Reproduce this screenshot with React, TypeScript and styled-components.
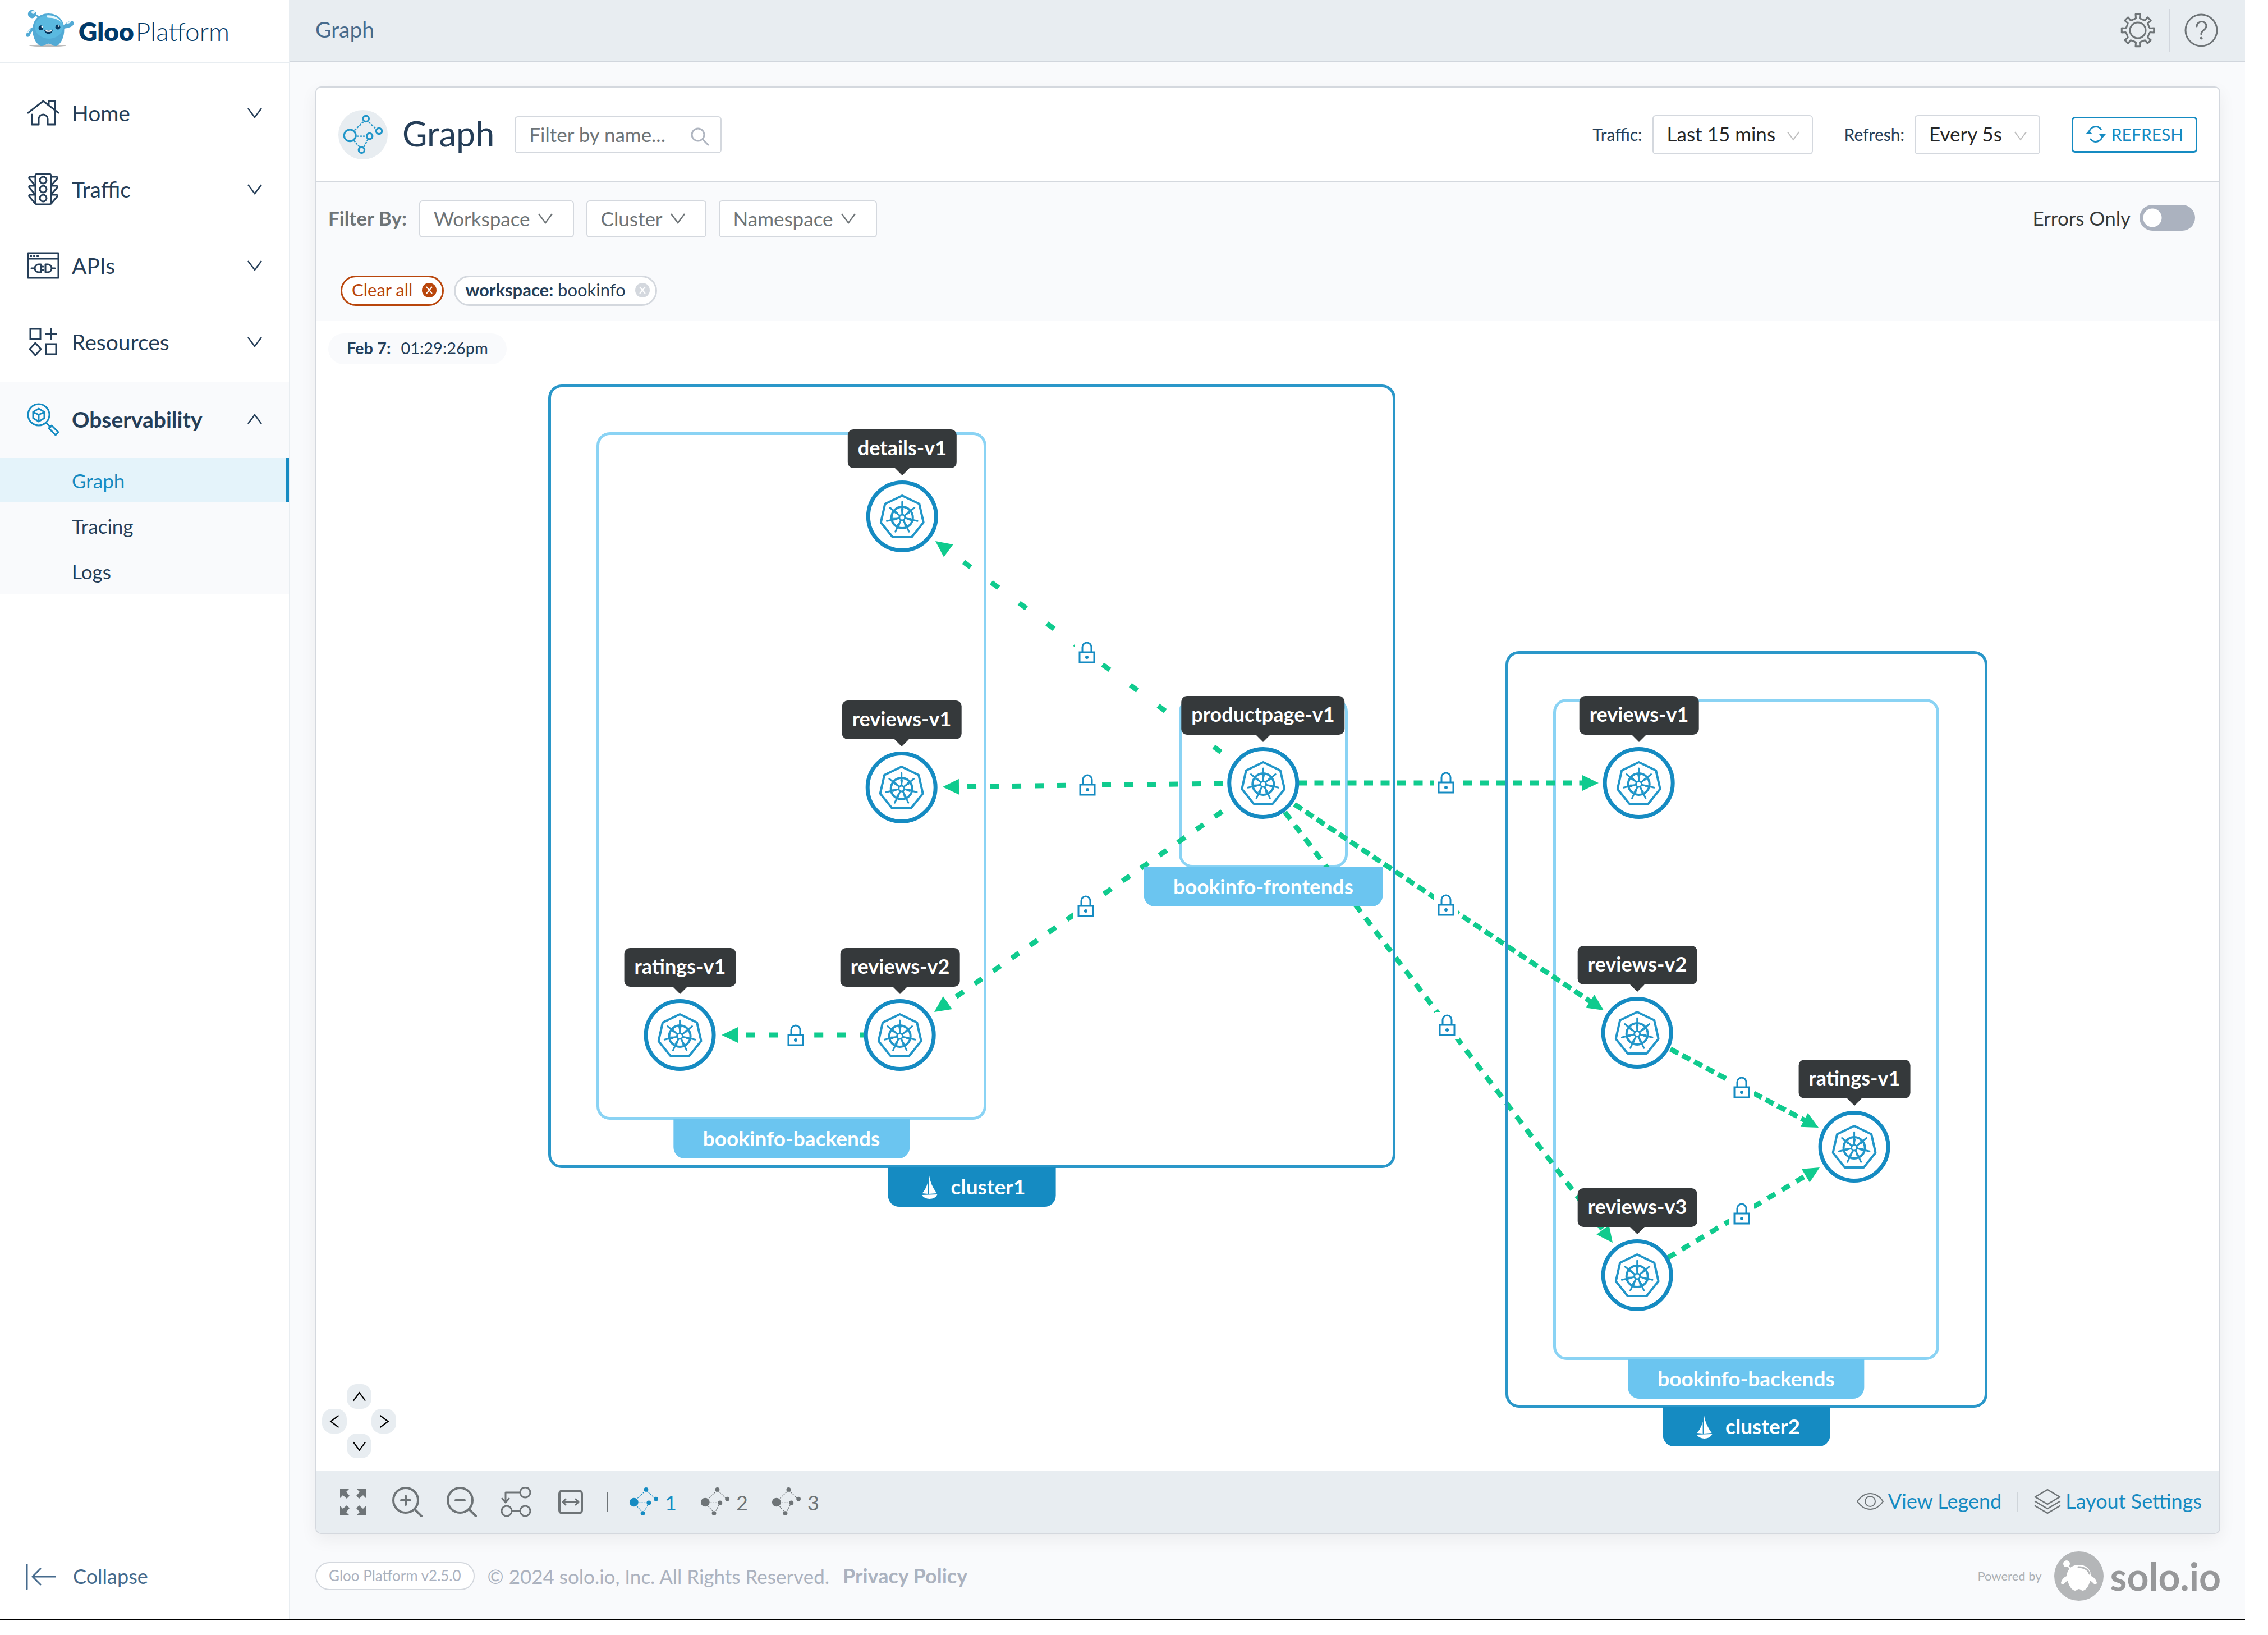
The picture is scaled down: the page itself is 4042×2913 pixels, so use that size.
import React from "react";
import styled, { createGlobalStyle } from "styled-components";

const color = {
  navy: "#253e58",
  slate: "#466b8d",
  gray: "#6e7477",
  muted: "#abb2bf",
  line: "#d4d8de",
  bar: "#e8edf1",
  page: "#f9fafc",
  blue: "#158bc2",
  sky: "#2196c9",
  light: "#8ad3f4",
  tag: "#6bc5f0",
  green: "#10cb8e",
  dark: "#35393b",
  orange: "#b9460c",
};

const GlobalStyle = createGlobalStyle`
  *, *::before, *::after { box-sizing: border-box; }
  body { margin: 0; background: #fff; color: ${color.navy}; font-family: Lato, "Open Sans", sans-serif; line-height: 1.2; }
  button, input, select { font: inherit; color: inherit; margin: 0; }
  button { cursor: pointer; padding: 0; border: 0; background: none; }
  a { color: inherit; text-decoration: none; }
  svg { display: block; flex: none; }
`;

/* ---------- page frame ---------- */

const Page = styled.div`
  display: grid;
  grid-template-columns: 516px minmax(0, 1fr);
  min-height: calc(100vh - 27px);
  margin-right: 41px;
  border-bottom: 1px solid #000;
`;

const Sidebar = styled.aside`
  display: flex;
  flex-direction: column;
  border-right: 1px solid ${color.bar};
  background: #fff;
`;

const Brand = styled.a`
  display: flex;
  align-items: center;
  gap: 8px;
  height: 112px;
  padding: 0 0 10px 46px;
  border-bottom: 2px solid ${color.bar};
  color: #003a69;
  font-size: 46px;
`;

const BrandName = styled.span`
  padding-top: 12px;
  font-weight: 300;
  b {
    font-weight: 800;
    margin-right: 3px;
  }
`;

const Nav = styled.nav`
  flex: 1;
  padding-top: 22px;
`;

const NavButton = styled.button<{ $open?: boolean }>`
  display: grid;
  grid-template-columns: 58px 1fr 26px;
  align-items: center;
  column-gap: 22px;
  width: 100%;
  height: 136px;
  padding: 0 48px 2px;
  text-align: left;
  font-size: 39px;
  font-weight: ${(p) => (p.$open ? 700 : 400)};
  svg {
    justify-self: center;
  }
`;

const NavSection = styled.div`
  margin-top: 2px;
  background: ${color.page};
`;

const SubList = styled.ul`
  display: grid;
  gap: 2px;
  margin: 0;
  padding: 0 0 1px;
  list-style: none;
`;

const SubLink = styled.a<{ $active?: boolean }>`
  display: flex;
  align-items: center;
  height: 79px;
  padding-left: 128px;
  border-right: 6px solid ${(p) => (p.$active ? color.blue : "transparent")};
  background: ${(p) => (p.$active ? "#e4f3fa" : "transparent")};
  color: ${(p) => (p.$active ? color.blue : color.navy)};
  font-size: 35px;
`;

const Collapse = styled.button`
  display: flex;
  align-items: center;
  gap: 30px;
  height: 152px;
  padding-left: 46px;
  color: ${color.slate};
  font-size: 36px;
`;

const Main = styled.main`
  display: flex;
  flex-direction: column;
  min-width: 0;
  background: ${color.page};
`;

const TopBar = styled.header`
  display: flex;
  align-items: center;
  justify-content: space-between;
  height: 110px;
  padding: 0 48px 0 46px;
  border-bottom: 2px solid #d1d6dd;
  background: ${color.bar};
  color: ${color.slate};
  font-size: 39px;
`;

const Crumb = styled.span`
  padding-bottom: 4px;
`;

const TopActions = styled.div`
  display: flex;
  align-items: center;
  gap: 25px;
`;

const Divider = styled.span<{ $height: number; $color: string }>`
  width: 2px;
  height: ${(p) => p.$height}px;
  background: ${(p) => p.$color};
`;

const IconButton = styled.button`
  display: flex;
  align-items: center;
  justify-content: center;
  color: ${color.gray};
`;

/* ---------- card ---------- */

const Card = styled.section`
  display: flex;
  flex: 1;
  flex-direction: column;
  margin: 44px 44px 0 46px;
  border: 2px solid ${color.line};
  border-radius: 10px;
  background: #fff;
  box-shadow: 0 10px 30px rgba(0, 0, 0, 0.06);
  overflow: hidden;
`;

const CardHeader = styled.div`
  display: flex;
  align-items: center;
  height: 169px;
  padding: 0 39px;
  border-bottom: 2px solid ${color.line};
`;

const RoundIcon = styled.span`
  display: flex;
  align-items: center;
  justify-content: center;
  width: 88px;
  height: 88px;
  border-radius: 50%;
  background: ${color.bar};
  color: ${color.sky};
`;

const Title = styled.h1`
  margin: 0 36px 0 26px;
  padding-bottom: 4px;
  font-size: 61px;
  font-weight: 400;
`;

const SearchBox = styled.label`
  display: flex;
  align-items: center;
  width: 369px;
  height: 66px;
  padding: 0 20px 0 24px;
  border: 2px solid ${color.line};
  border-radius: 6px;
  color: #afb5c0;
  svg {
    margin-top: 6px;
  }
`;

const SearchInput = styled.input`
  flex: 1;
  min-width: 0;
  padding: 0 0 2px;
  border: 0;
  outline: 0;
  background: none;
  font-size: 35px;
  &::placeholder {
    color: ${color.gray};
    opacity: 1;
  }
`;

const HeaderControls = styled.div`
  display: flex;
  align-items: center;
  margin-left: auto;
  gap: 56px;
`;

const Field = styled.div`
  display: flex;
  align-items: center;
  gap: 18px;
  font-size: 30px;
  label {
    padding-bottom: 2px;
  }
`;

const SelectWrap = styled.span<{ $width: number }>`
  position: relative;
  display: block;
  width: ${(p) => p.$width}px;
  svg {
    position: absolute;
    right: 24px;
    top: 26px;
    color: #bfbfbf;
    pointer-events: none;
  }
`;

const Select = styled.select`
  width: 100%;
  height: 70px;
  padding: 0 0 4px 24px;
  border: 2px solid ${color.line};
  border-radius: 6px;
  background: #fff;
  color: #262626;
  font-size: 35px;
  appearance: none;
`;

const RefreshButton = styled.button`
  display: flex;
  align-items: center;
  justify-content: center;
  gap: 10px;
  width: 224px;
  height: 64px;
  padding-bottom: 2px;
  border: 3px solid ${color.blue};
  border-radius: 6px;
  color: ${color.blue};
  font-size: 30px;
`;

const Filters = styled.div`
  height: 247px;
  padding: 32px 43px 0 21px;
  background: ${color.page};
`;

const FilterRow = styled.div`
  display: flex;
  align-items: center;
  gap: 22px;
  color: ${color.gray};
  font-size: 35px;
  b {
    padding-bottom: 4px;
  }
`;

const FilterButton = styled.button`
  display: flex;
  align-items: center;
  gap: 14px;
  height: 66px;
  padding: 0 36px 2px 24px;
  border: 2px solid ${color.line};
  border-radius: 6px;
  background: #fff;
`;

const SwitchLabel = styled.label`
  display: flex;
  align-items: center;
  gap: 16px;
  margin-left: auto;
  padding-bottom: 4px;
  color: ${color.dark};
`;

const Switch = styled.input`
  width: 99px;
  height: 46px;
  border-radius: 23px;
  appearance: none;
  background: radial-gradient(circle at 23px 50%, #fff 16px, transparent 17px) #abb2bf;
`;

const Chips = styled.div`
  display: flex;
  gap: 18px;
  margin: 68px 0 0 22px;
`;

const Chip = styled.button<{ $tone: string; $text: string }>`
  display: flex;
  align-items: center;
  gap: 17px;
  height: 54px;
  padding: 0 10px 2px 17px;
  border: 3px solid ${(p) => p.$tone};
  border-radius: 27px;
  background: #fff;
  color: ${(p) => p.$text};
  font-size: 31px;
  svg {
    color: ${(p) => p.$tone};
  }
`;

/* ---------- canvas ---------- */

const Canvas = styled.div`
  position: relative;
  flex: 1;
  min-height: 2048px;
`;

const Stamp = styled.div`
  position: absolute;
  left: 21px;
  top: 22px;
  display: flex;
  align-items: center;
  gap: 18px;
  height: 55px;
  padding: 0 33px 2px;
  border-radius: 28px;
  background: ${color.page};
  font-size: 29px;
`;

const Edges = styled.svg`
  position: absolute;
  inset: 0;
  width: 100%;
  height: 100%;
  z-index: 1;
  pointer-events: none;
`;

const Group = styled.div<{ $x: number; $y: number; $w: number; $h: number; $cluster?: boolean }>`
  position: absolute;
  left: ${(p) => p.$x}px;
  top: ${(p) => p.$y}px;
  width: ${(p) => p.$w}px;
  height: ${(p) => p.$h}px;
  border: 5px solid ${(p) => (p.$cluster ? "#2a97c9" : color.light)};
  border-radius: 24px;
  z-index: ${(p) => (p.$cluster ? 2 : "auto")};
`;

const GroupTag = styled.span<{ $cluster?: boolean }>`
  position: absolute;
  top: calc(100% + 4px);
  left: 50%;
  transform: translateX(-50%);
  z-index: 3;
  display: flex;
  align-items: center;
  gap: 24px;
  height: 70px;
  padding: 0 ${(p) => (p.$cluster ? 54 : 53)}px 2px ${(p) => (p.$cluster ? 60 : 53)}px;
  border-radius: 0 0 20px 20px;
  background: ${(p) => (p.$cluster ? color.blue : color.tag)};
  color: #fff;
  font-size: 37px;
  font-weight: 700;
  white-space: nowrap;
`;

const NodeBox = styled.div<{ $x: number; $y: number }>`
  position: absolute;
  left: ${(p) => p.$x}px;
  top: ${(p) => p.$y - 155}px;
  z-index: 4;
  display: flex;
  flex-direction: column;
  align-items: center;
  transform: translateX(-50%);
`;

const NodeLabel = styled.span`
  display: flex;
  align-items: center;
  height: 69px;
  padding: 0 18px 3px;
  border-radius: 10px;
  background: ${color.dark};
  color: #fff;
  font-size: 36px;
  font-weight: 700;
  white-space: nowrap;
`;

const NodePointer = styled.span`
  width: 26px;
  height: 13px;
  margin-bottom: 9px;
  background: ${color.dark};
  clip-path: polygon(0 0, 100% 0, 50% 100%);
`;

const NodeCircle = styled.button`
  display: flex;
  align-items: center;
  justify-content: center;
  width: 128px;
  height: 128px;
  border: 7px solid ${color.blue};
  border-radius: 50%;
  background: #fff;
  color: ${color.sky};
`;

const PanPad = styled.div`
  position: absolute;
  left: 10px;
  bottom: 22px;
  display: grid;
  grid-template-columns: repeat(3, 44px);
  grid-template-rows: repeat(3, 44px);
  grid-template-areas: ". up ." "left . right" ". down .";
`;

const PanButton = styled.button<{ $area: string }>`
  grid-area: ${(p) => p.$area};
  display: flex;
  align-items: center;
  justify-content: center;
  border-radius: 18px;
  background: ${color.bar};
  color: #000;
`;

/* ---------- toolbar and footer ---------- */

const ToolBar = styled.div`
  display: flex;
  align-items: center;
  justify-content: space-between;
  height: 111px;
  padding: 0 31px 0 38px;
  background: ${color.bar};
  font-size: 36px;
`;

const Tools = styled.div<{ $gap: number }>`
  display: flex;
  align-items: center;
  gap: ${(p) => p.$gap}px;
`;

const Tool = styled(IconButton)`
  width: 53px;
  height: 53px;
`;

const LayoutButton = styled.button<{ $active?: boolean }>`
  display: flex;
  align-items: center;
  gap: 11px;
  width: 83px;
  color: ${(p) => (p.$active ? color.blue : color.gray)};
  span {
    padding-top: 5px;
  }
`;

const ToolLink = styled.button`
  display: flex;
  align-items: center;
  gap: 8px;
  padding-bottom: 2px;
  color: ${color.blue};
  svg {
    color: ${color.gray};
  }
`;

const Footer = styled.footer`
  display: flex;
  align-items: center;
  height: 152px;
  padding: 0 43px 2px 46px;
  color: ${color.muted};
  font-size: 35px;
`;

const Version = styled.span`
  display: flex;
  align-items: center;
  height: 50px;
  margin-right: 23px;
  padding: 0 22px;
  border: 2px solid ${color.line};
  border-radius: 25px;
  background: #fff;
  font-size: 26px;
`;

const PrivacyLink = styled.a`
  margin-left: 24px;
  font-size: 36px;
  font-weight: 700;
`;

const Powered = styled.a`
  display: flex;
  align-items: center;
  margin-left: auto;
  font-size: 22px;
  color: #abb0b5;
  svg {
    margin: 0 12px 0 22px;
  }
  strong {
    color: #97989a;
    font-size: 68px;
    line-height: 80px;
    font-weight: 700;
  }
`;

/* ---------- icons ---------- */

type Dir = "up" | "down" | "left" | "right";
const chevronPaths: Record<Dir, string> = {
  down: "M1 5 13 21 25 5",
  up: "M1 21 13 5 25 21",
  left: "M21 1 5 13 21 25",
  right: "M5 1 21 13 5 25",
};

const Chevron = ({ dir = "down", size = 26 }: { dir?: Dir; size?: number }) => (
  <svg width={size} height={size} viewBox="0 0 26 26" fill="none" stroke="currentColor" strokeWidth="2.5">
    <path d={chevronPaths[dir]} />
  </svg>
);

const line = { fill: "none", stroke: "currentColor", strokeWidth: 3, strokeLinejoin: "round" as const, strokeLinecap: "round" as const };

const HomeIcon = () => (
  <svg width="58" height="46" viewBox="0 0 58 46" {...line}>
    <path d="M2 23 29 2l27 21M39 9V2h11v16M9 26v18h12V34a8 8 0 0 1 16 0v10h13V20" />
  </svg>
);

const TrafficIcon = () => (
  <svg width="54" height="58" viewBox="0 0 54 58" {...line}>
    <rect x="13" y="2" width="28" height="54" rx="3" />
    {[13, 29, 45].map((y) => (
      <g key={y}>
        <circle cx="27" cy={y} r="6" />
        <path d={`M13 ${y - 6}H4q-3 0-2 3l11 13M41 ${y - 6}h9q3 0 2 3l-11 13`} />
      </g>
    ))}
  </svg>
);

const ApiIcon = () => (
  <svg width="58" height="48" viewBox="0 0 58 48" {...line}>
    <path d="M2 2h54v44H2zM2 12h54M8 29h6M25 22v14h-4a7 7 0 0 1 0-14zM25 26h4M25 32h4M33 22v14h4a7 7 0 0 0 0-14zM44 29h6" />
    <path d="M7 7h.1M13 7h.1M19 7h.1" strokeWidth="4" />
  </svg>
);

const ResourcesIcon = () => (
  <svg width="52" height="50" viewBox="0 0 52 50" {...line} strokeLinecap="butt" strokeLinejoin="miter">
    <path d="M3 2h18v18H3zM31 29h18v18H31zM40 1v20M30 11h21M12 27l10 11-10 11L2 38z" />
  </svg>
);

const ObserveIcon = () => (
  <svg width="58" height="58" viewBox="0 0 58 58" {...line} stroke={color.blue}>
    <circle cx="21" cy="21" r="19" />
    <path d="M21 10l10 6v11l-10 6-10-6V16zM11 16l10 5 10-5M21 21v12M34 35l8 8M39 45l5-5 12 12-5 5z" />
  </svg>
);

const GearIcon = () => {
  const pts: string[] = [];
  for (let i = 0; i < 8; i++) {
    const a = (i * Math.PI) / 4;
    [[-0.29, 21], [-0.16, 22], [-0.14, 29], [0.14, 29], [0.16, 22], [0.29, 21]].forEach(([d, r]) =>
      pts.push(`${(31 + r * Math.sin(a + d)).toFixed(1)},${(31 - r * Math.cos(a + d)).toFixed(1)}`)
    );
  }
  return (
    <svg width="62" height="62" viewBox="0 0 62 62" {...line}>
      <polygon points={pts.join(" ")} />
      <circle cx="31" cy="31" r="14" />
    </svg>
  );
};

const HelpIcon = () => (
  <svg width="60" height="60" viewBox="0 0 60 60" {...line}>
    <circle cx="30" cy="30" r="28" />
    <path d="M22 23c0-11 17-11 17-1 0 8-9 7-9 15" />
    <circle cx="30" cy="44" r="2" fill="currentColor" strokeWidth="1" />
  </svg>
);

const GraphIcon = ({ size, solid }: { size: number; solid?: boolean }) => (
  <svg width={size} height={size} viewBox="0 0 54 54" fill="none" stroke="currentColor">
    <path d="M9 27 31 6 48 22M9 29h27L26 48 9 29" strokeWidth={solid ? 1.2 : 1.8} strokeDasharray="3 1.5" />
    <g strokeWidth={solid ? 0 : 2.5} fill={solid ? "currentColor" : color.bar}>
      <circle cx="9" cy="28" r="8" />
      <circle cx="31" cy="5" r={4} />
      <circle cx="49" cy="22" r={4} />
      <circle cx="36" cy="29" r={4} />
      <circle cx="25" cy="48" r={4} />
    </g>
  </svg>
);

const SearchIcon = () => (
  <svg width="34" height="34" viewBox="0 0 34 34" {...line}>
    <circle cx="14" cy="14" r="11" />
    <path d="M22 22l10 10" />
  </svg>
);

const RefreshIcon = () => (
  <svg width="36" height="32" viewBox="0 0 36 32" fill="none" stroke="currentColor" strokeWidth="3">
    <path d="M6 14A12 12 0 0 1 28 8M30 18A12 12 0 0 1 8 24" />
    <path d="M0 16 6 9l6 7zM24 16l6 7 6-7z" fill="currentColor" stroke="none" />
  </svg>
);

const CrossDot = () => (
  <svg width="26" height="26" viewBox="0 0 26 26">
    <circle cx="13" cy="13" r="13" fill="currentColor" />
    <path d="M8 7l10 12M18 7 8 19" stroke="#fff" strokeWidth="2" />
  </svg>
);

const ExpandIcon = () => (
  <svg width="48" height="48" viewBox="0 0 48 48" fill="currentColor">
    {[0, 90, 180, 270].map((r) => (
      <path key={r} transform={`rotate(${r} 24 24)`} d="M1 1h16l-5 5 6 7-5 5-7-6-5 5z" />
    ))}
  </svg>
);

const ZoomIcon = ({ plus }: { plus?: boolean }) => (
  <svg width="54" height="54" viewBox="0 0 54 54" {...line} strokeWidth="4">
    <circle cx="24" cy="24" r="22" />
    <path d={`M16 24h16${plus ? "M24 16v16" : ""}M40 40l12 12`} />
  </svg>
);

const RelayoutIcon = () => (
  <svg width="54" height="54" viewBox="0 0 54 54" {...line}>
    <circle cx="43" cy="10" r="9" />
    <circle cx="10" cy="43" r="9" />
    <circle cx="43" cy="43" r="9" />
    <path d="M34 10H8v17M2 21l6 7 6-7M19 43h15" />
  </svg>
);

const FitIcon = () => (
  <svg width="44" height="44" viewBox="0 0 44 44" {...line} strokeWidth="4">
    <rect x="2" y="2" width="40" height="40" rx="5" />
    <path d="M8 22h28M13 17l-5 5 5 5M31 17l5 5-5 5" strokeWidth="3" />
  </svg>
);

const EyeIcon = () => (
  <svg width="48" height="30" viewBox="0 0 48 30" {...line} strokeWidth="2">
    <path d="M1 15C8 5 16 1 24 1s16 4 23 14c-7 10-15 14-23 14S8 25 1 15z" />
    <circle cx="24" cy="15" r="9" />
  </svg>
);

const LayersIcon = () => (
  <svg width="48" height="46" viewBox="0 0 48 46" {...line} strokeWidth="2.5">
    <path d="M24 2l22 13-22 13L2 15zM2 23l22 13 22-13M2 31l22 13 22-13" />
  </svg>
);

const CollapseIcon = () => (
  <svg width="54" height="46" viewBox="0 0 54 46" {...line}>
    <path d="M2 1v44M12 23h41M26 9 12 23l14 14" />
  </svg>
);

const SailIcon = () => (
  <svg width="28" height="44" viewBox="0 0 28 44" fill="#fff">
    <path d="M13 0q2 18 14 34l-14 1zM11 14v21L1 34q7-8 10-20zM0 37l28-1q-4 8-14 8-9 0-14-7z" />
  </svg>
);

const polar = (r: number, deg: number) => {
  const a = (deg * Math.PI) / 180;
  return `${(40 + r * Math.sin(a)).toFixed(1)} ${(42 - r * Math.cos(a)).toFixed(1)}`;
};
const sevenths = [0, 1, 2, 3, 4, 5, 6].map((i) => (i * 360) / 7);

const KubeIcon = () => (
  <svg width="80" height="80" viewBox="0 0 80 80" fill="none" stroke="currentColor" strokeLinejoin="round" strokeLinecap="round">
    <path d={`M${sevenths.map((a) => polar(39, a)).join("L")}Z`} strokeWidth="4" />
    <circle cx="40" cy="42" r="19" strokeWidth="4" />
    {sevenths.map((a) => (
      <g key={a}>
        <path d={`M${polar(5, a)}L${polar(28, a)}`} strokeWidth="3" />
        <path d={`M${polar(6, a)}L${polar(16, a - 7)}L${polar(16, a + 7)}Z`} fill="currentColor" strokeWidth="1" />
      </g>
    ))}
    <circle cx="40" cy="42" r="5" fill="#fff" strokeWidth="3" />
  </svg>
);

const GlooMascot = () => (
  <svg width="86" height="67" viewBox="0 0 256 200">
    <ellipse cx="116" cy="192" rx="98" ry="6" fill="#bcbcbc" />
    <g fill="#52aad5">
      <circle cx="33" cy="24" r="22" />
      <path d="M46 22q12 10 34 14l-8 14q-14-16-32-20z" />
      <path d="M36 94c-16 6-34 26-35 44 2 12 18 8 22-2 2-10 6-16 16-24z" />
      <path d="M200 84c14-14 32-28 50-22 10 12 2 24-10 30-14 6-26 8-40 10z" />
      <path d="M120 21c52 0 84 36 84 84 0 40-14 72-38 88-14 4-26-2-34-10q-12-4-22 0c-8 8-22 14-34 10C50 177 36 145 36 105c0-48 32-84 84-84z" />
    </g>
    <ellipse cx="123" cy="92" rx="75" ry="63" fill="#5ab9e0" />
    <g fill="#e8f7fc">
      <circle cx="39" cy="14" r="9" />
      <path d="M113 31c36-2 66 16 78 40-18-20-42-28-74-28-8-2-8-10-4-12zM212 78q12-16 28-16 4 10-28 16zM6 126q4-18 26-30-10 10-18 28z" />
    </g>
    <g fill="#07375f">
      <circle cx="80" cy="97" r="13" />
      <circle cx="170" cy="93" r="13" />
      <path d="M97 107q22 6 46 0-2 22-22 24-20-2-24-24z" />
    </g>
    <path d="M104 110q18 4 34 0l-4 7q-14 3-26 0z" fill="#fff" />
    <circle cx="86" cy="92" r="4" fill="#fff" />
    <circle cx="175" cy="88" r="4" fill="#fff" />
  </svg>
);

const SoloMark = () => (
  <svg width="88" height="88" viewBox="0 0 88 88">
    <circle cx="44" cy="44" r="44" fill="#b4b6b8" />
    <g fill="#fff">
      <circle cx="22" cy="22" r="6" />
      <path d="M24 26l8 4-4 4zM44 24c14 0 21 9 22 20 5 2 9 7 10 12-1 5-5 3-8-1l-4-3c-2 9-7 17-13 18-3 0-4-3-7-3s-4 3-7 3c-6-1-11-9-13-18l-4 3c-3 4-7 6-8 1 1-5 5-10 10-12 1-11 8-20 22-20z" />
    </g>
    <path d="M43 28c10 0 17 4 20 12" fill="none" stroke="#b4b6b8" strokeWidth="3" strokeLinecap="round" />
  </svg>
);

/* ---------- data ---------- */

const navItems = [
  { name: "Home", Icon: HomeIcon },
  { name: "Traffic", Icon: TrafficIcon },
  { name: "APIs", Icon: ApiIcon },
  { name: "Resources", Icon: ResourcesIcon },
];

const groups = [
  { name: "bookinfo-backends", x: 499, y: 198, w: 695, h: 1225 },
  { name: "bookinfo-frontends", x: 1537, y: 672, w: 301, h: 302 },
  { name: "bookinfo-backends", x: 2204, y: 673, w: 688, h: 1178 },
  { name: "cluster1", x: 413, y: 113, w: 1510, h: 1396, cluster: true },
  { name: "cluster2", x: 2119, y: 588, w: 859, h: 1348, cluster: true },
];

const nodes = [
  { name: "details-v1", x: 1044, y: 348 },
  { name: "reviews-v1", x: 1043, y: 831 },
  { name: "ratings-v1", x: 648, y: 1272 },
  { name: "reviews-v2", x: 1040, y: 1272 },
  { name: "productpage-v1", x: 1687, y: 823 },
  { name: "reviews-v1", x: 2357, y: 823 },
  { name: "reviews-v2", x: 2354, y: 1268 },
  { name: "ratings-v1", x: 2741, y: 1471 },
  { name: "reviews-v3", x: 2354, y: 1700 },
];

// from: start of the dashes, to: tip of the arrow, step: dash period, lock: mTLS badge
const edges = [
  { from: [1612, 768], to: [1103, 392], step: 61.6, lock: [1373, 591] },
  { from: [1616, 824], to: [1116, 830], step: 40, lock: [1374, 827] },
  { from: [1614, 874], to: [1101, 1231], step: 40.1, lock: [1371, 1043] },
  { from: [984, 1272], to: [722, 1272], step: 40.4, lock: [854, 1273] },
  { from: [1749, 823], to: [2285, 823], step: 29.5, lock: [2013, 823] },
  { from: [1743, 861], to: [2294, 1228], step: 24, lock: [2013, 1041] },
  { from: [1726, 875], to: [2310, 1642], step: 29.6, lock: [2015, 1255] },
  { from: [2413, 1297], to: [2677, 1437], step: 24, lock: [2540, 1366] },
  { from: [2408, 1669], to: [2679, 1508], step: 29.6, lock: [2540, 1591] },
];

const EdgeLine = ({ from, to, step }: { from: number[]; to: number[]; step: number }) => {
  const dx = to[0] - from[0];
  const dy = to[1] - from[1];
  const length = Math.hypot(dx, dy);
  const angle = (Math.atan2(dy, dx) * 180) / Math.PI;
  return (
    <g transform={`translate(${from[0]} ${from[1]}) rotate(${angle})`}>
      <line x2={length - 28} stroke={color.green} strokeWidth="9" strokeDasharray={`16 ${step - 16}`} />
      <polygon points={`${length},0 ${length - 29},-14 ${length - 29},14`} fill={color.green} />
    </g>
  );
};

const LockBadge = ({ at }: { at: number[] }) => (
  <g transform={`translate(${at[0]} ${at[1]})`} fill="none" stroke={color.blue} strokeWidth="3">
    <rect x="-22" y="-24" width="44" height="48" fill="#fff" stroke="none" />
    <rect x="-13" y="-1" width="26" height="18" />
    <path d="M-8-1v-9a8 8 0 0 1 16 0v9" />
    <circle cy="8" r="3" fill={color.blue} stroke="none" />
  </g>
);

export default function App() {
  return (
    <>
      <GlobalStyle />
      <Page>
        <Sidebar>
          <Brand href="#home">
            <GlooMascot />
            <BrandName>
              <b>Gloo</b>Platform
            </BrandName>
          </Brand>
          <Nav aria-label="Main">
            {navItems.map(({ name, Icon }) => (
              <NavButton key={name} type="button">
                <Icon />
                {name}
                <Chevron />
              </NavButton>
            ))}
            <NavSection>
              <NavButton type="button" $open aria-expanded="true">
                <ObserveIcon />
                Observability
                <Chevron dir="up" />
              </NavButton>
              <SubList>
                <li>
                  <SubLink href="#graph" $active aria-current="page">
                    Graph
                  </SubLink>
                </li>
                <li>
                  <SubLink href="#tracing">Tracing</SubLink>
                </li>
                <li>
                  <SubLink href="#logs">Logs</SubLink>
                </li>
              </SubList>
            </NavSection>
          </Nav>
          <Collapse type="button">
            <CollapseIcon />
            Collapse
          </Collapse>
        </Sidebar>

        <Main>
          <TopBar>
            <Crumb>Graph</Crumb>
            <TopActions>
              <IconButton type="button" aria-label="Settings">
                <GearIcon />
              </IconButton>
              <Divider $height={77} $color="#d1d6dd" />
              <IconButton type="button" aria-label="Help">
                <HelpIcon />
              </IconButton>
            </TopActions>
          </TopBar>

          <Card>
            <CardHeader>
              <RoundIcon>
                <GraphIcon size={70} />
              </RoundIcon>
              <Title>Graph</Title>
              <SearchBox>
                <SearchInput type="text" placeholder="Filter by name..." aria-label="Filter by name" />
                <SearchIcon />
              </SearchBox>
              <HeaderControls>
                <Field>
                  <label htmlFor="traffic">Traffic:</label>
                  <SelectWrap $width={286}>
                    <Select id="traffic">
                      <option>Last 15 mins</option>
                    </Select>
                    <Chevron size={22} />
                  </SelectWrap>
                </Field>
                <Field>
                  <label htmlFor="refresh">Refresh:</label>
                  <SelectWrap $width={224}>
                    <Select id="refresh">
                      <option>Every 5s</option>
                    </Select>
                    <Chevron size={22} />
                  </SelectWrap>
                </Field>
                <RefreshButton type="button">
                  <RefreshIcon />
                  REFRESH
                </RefreshButton>
              </HeaderControls>
            </CardHeader>

            <Filters>
              <FilterRow>
                <b>Filter By:</b>
                {["Workspace", "Cluster", "Namespace"].map((name) => (
                  <FilterButton key={name} type="button">
                    {name}
                    <Chevron />
                  </FilterButton>
                ))}
                <SwitchLabel>
                  Errors Only
                  <Switch type="checkbox" role="switch" />
                </SwitchLabel>
              </FilterRow>
              <Chips>
                <Chip type="button" $tone={color.orange} $text={color.orange}>
                  Clear all
                  <CrossDot />
                </Chip>
                <Chip type="button" $tone={color.line} $text={color.navy}>
                  <span>
                    <b>workspace:</b> bookinfo
                  </span>
                  <CrossDot />
                </Chip>
              </Chips>
            </Filters>

            <Canvas>
              <Stamp>
                <b>Feb 7:</b>
                <span>01:29:26pm</span>
              </Stamp>
              {groups.map((g, i) => (
                <Group key={i} $x={g.x} $y={g.y} $w={g.w} $h={g.h} $cluster={g.cluster}>
                  <GroupTag $cluster={g.cluster}>
                    {g.cluster && <SailIcon />}
                    {g.name}
                  </GroupTag>
                </Group>
              ))}
              <Edges>
                {edges.map((e, i) => (
                  <EdgeLine key={i} from={e.from} to={e.to} step={e.step} />
                ))}
                {edges.map((e, i) => (
                  <LockBadge key={i} at={e.lock} />
                ))}
              </Edges>
              {nodes.map((n, i) => (
                <NodeBox key={i} $x={n.x} $y={n.y}>
                  <NodeLabel>{n.name}</NodeLabel>
                  <NodePointer />
                  <NodeCircle type="button" aria-label={n.name}>
                    <KubeIcon />
                  </NodeCircle>
                </NodeBox>
              ))}
              <PanPad>
                {(["up", "left", "right", "down"] as Dir[]).map((dir) => (
                  <PanButton key={dir} type="button" $area={dir} aria-label={`Pan ${dir}`}>
                    <Chevron dir={dir} size={23} />
                  </PanButton>
                ))}
              </PanPad>
            </Canvas>

            <ToolBar>
              <Tools $gap={38}>
                <Tools $gap={44}>
                  <Tool type="button" aria-label="Full screen">
                    <ExpandIcon />
                  </Tool>
                  <Tool type="button" aria-label="Zoom in">
                    <ZoomIcon plus />
                  </Tool>
                  <Tool type="button" aria-label="Zoom out">
                    <ZoomIcon />
                  </Tool>
                  <Tool type="button" aria-label="Rearrange">
                    <RelayoutIcon />
                  </Tool>
                  <Tool type="button" aria-label="Fit to width">
                    <FitIcon />
                  </Tool>
                </Tools>
                <Divider $height={36} $color={color.gray} />
                <Tools $gap={44}>
                  {[1, 2, 3].map((n) => (
                    <LayoutButton key={n} type="button" $active={n === 1}>
                      <GraphIcon size={53} solid />
                      <span>{n}</span>
                    </LayoutButton>
                  ))}
                </Tools>
              </Tools>
              <Tools $gap={28}>
                <ToolLink type="button">
                  <EyeIcon />
                  View Legend
                </ToolLink>
                <Divider $height={36} $color="#cfd5da" />
                <ToolLink type="button">
                  <LayersIcon />
                  Layout Settings
                </ToolLink>
              </Tools>
            </ToolBar>
          </Card>

          <Footer>
            <Version>Gloo Platform v2.5.0</Version>
            <span>© 2024 solo.io, Inc. All Rights Reserved.</span>
            <PrivacyLink href="#privacy">Privacy Policy</PrivacyLink>
            <Powered href="#solo">
              Powered by
              <SoloMark />
              <strong>solo.io</strong>
            </Powered>
          </Footer>
        </Main>
      </Page>
    </>
  );
}
